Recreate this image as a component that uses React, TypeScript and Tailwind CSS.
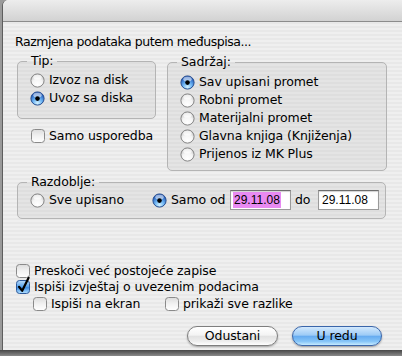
import React from 'react';

// Aqua-style radio button
const Radio: React.FC<{ on?: boolean }> = ({ on }) => (
  <svg width="15" height="15" viewBox="0 0 15 15" className="shrink-0">
    <defs>
      <radialGradient id="rOff" cx="50%" cy="80%" r="70%">
        <stop offset="0%" stopColor="#ffffff" />
        <stop offset="60%" stopColor="#f4f4f4" />
        <stop offset="100%" stopColor="#c9c9c9" />
      </radialGradient>
      <radialGradient id="rOn" cx="50%" cy="85%" r="75%">
        <stop offset="0%" stopColor="#d6f3ff" />
        <stop offset="45%" stopColor="#6fb6f4" />
        <stop offset="100%" stopColor="#1d56b8" />
      </radialGradient>
    </defs>
    <circle cx="7.5" cy="7.5" r="6.6" fill={on ? 'url(#rOn)' : 'url(#rOff)'} stroke={on ? '#2a4f8f' : '#858585'} strokeWidth="1" />
    <ellipse cx="7.5" cy="4.2" rx="4.2" ry="2.4" fill="#ffffff" opacity={on ? 0.55 : 0.7} />
    {on && <circle cx="7.5" cy="7.6" r="2.3" fill="#000" />}
  </svg>
);

// Aqua-style checkbox
const Check: React.FC<{ on?: boolean }> = ({ on }) => (
  <svg width="14" height="14" viewBox="0 0 14 14" className="shrink-0 overflow-visible">
    <defs>
      <linearGradient id="cOff" x1="0" y1="0" x2="0" y2="1">
        <stop offset="0%" stopColor="#dcdcdc" />
        <stop offset="50%" stopColor="#f2f2f2" />
        <stop offset="100%" stopColor="#ffffff" />
      </linearGradient>
      <linearGradient id="cOn" x1="0" y1="0" x2="0" y2="1">
        <stop offset="0%" stopColor="#b9dcfb" />
        <stop offset="45%" stopColor="#5da6ee" />
        <stop offset="55%" stopColor="#3d8de6" />
        <stop offset="100%" stopColor="#b6e4ff" />
      </linearGradient>
    </defs>
    <rect x="0.5" y="0.5" width="13" height="13" rx="3" fill={on ? 'url(#cOn)' : 'url(#cOff)'} stroke={on ? '#2e5a9c' : '#8a8a8a'} />
    {on && <path d="M3 6.8 L6.2 10.8 L12.6 -2.2" fill="none" stroke="#000" strokeWidth="2.2" strokeLinecap="round" strokeLinejoin="round" />}
  </svg>
);

const RadioRow: React.FC<{ on?: boolean; label: string; className?: string }> = ({ on, label, className = '' }) => (
  <div className={`flex items-center gap-[4px] h-[18px] ${className}`}>
    <Radio on={on} />
    <span className="whitespace-nowrap">{label}</span>
  </div>
);

const CheckRow: React.FC<{ on?: boolean; label: string; className?: string }> = ({ on, label, className = '' }) => (
  <div className={`flex items-center gap-[4px] ${className}`}>
    <Check on={on} />
    <span className="whitespace-nowrap">{label}</span>
  </div>
);

const Group: React.FC<{ label: string; className?: string; children: React.ReactNode }> = ({ label, className = '', children }) => (
  <fieldset className={`border border-[#b4b4b4] rounded-[5px] pl-[9px] bg-[rgba(0,0,0,0.045)] ${className}`}>
    <legend className="px-[4px] leading-[16px]">{label}</legend>
    {children}
  </fieldset>
);

const DateField: React.FC<{ value: string; selected?: boolean }> = ({ value, selected }) => (
  <div className="w-[61px] h-[20px] shrink-0 flex items-center pl-[2px] bg-white border border-[#9a9a9a] border-t-[#6e6e6e] shadow-[inset_0_1px_1px_rgba(0,0,0,0.18)] font-['Liberation_Sans',sans-serif] text-[12px] tracking-normal">
    {selected ? (
      <span className="h-[16px] leading-[16px] px-[1px] bg-[#e88af2]">{value}</span>
    ) : (
      <span className="pl-[1px]">{value}</span>
    )}
  </div>
);

export default function App() {
  return (
    <div className="w-[402px] h-[356px] flex flex-col bg-[#9a9a9a] overflow-hidden font-['DejaVu_Sans',sans-serif] text-[12.5px] tracking-[-0.1px] text-black">
      <div className="ml-[2px] h-[350px] shrink-0 flex flex-col border-l border-[#5e5e5e] rounded-tl-[6px] overflow-hidden bg-[repeating-linear-gradient(to_bottom,#efefef_0px,#efefef_2px,#e8e8e8_2px,#e8e8e8_4px)]">
        {/* title bar */}
        <div className="h-[22px] shrink-0 border-b border-[#8c8c8c] bg-[linear-gradient(to_bottom,#ededed,#d2d2d2)]" />

        <p className="pl-[12px] pt-[12px] leading-[16px] tracking-[-0.45px]">Razmjena podataka putem međuspisa...</p>

        <div className="flex items-start gap-[11px] pl-[14px] mt-[3px]">
          <div className="flex flex-col">
            <Group label="Tip:" className="w-[139px] pb-[11px]">
              <div className="ml-[3px] pt-[2px]">
                <RadioRow label="Izvoz na disk" />
                <RadioRow on label="Uvoz sa diska" />
              </div>
            </Group>
            <CheckRow label="Samo usporedba" className="mt-[8px] ml-[14px] h-[18px]" />
          </div>

          <Group label="Sadržaj:" className="w-[220px] mt-[1px] pb-[7px]">
            <div className="ml-[3px] pt-[3px]">
              <RadioRow on label="Sav upisani promet" />
              <RadioRow label="Robni promet" />
              <RadioRow label="Materijalni promet" />
              <RadioRow label="Glavna knjiga (Knjiženja)" />
              <RadioRow label="Prijenos iz MK Plus" />
            </div>
          </Group>
        </div>

        <div className="pl-[14px] mt-[3px]">
          <Group label="Razdoblje:" className="w-[369px] pb-[8px]">
            <div className="ml-[3px] flex items-center h-[20px]">
              <RadioRow label="Sve upisano" className="w-[122px]" />
              <RadioRow on label="Samo od" className="w-[78px]" />
              <DateField value="29.11.08" selected />
              <span className="w-[27px] pl-[4px]">do</span>
              <DateField value="29.11.08" />
            </div>
          </Group>
        </div>

        <CheckRow label="Preskoči već postojeće zapise" className="mt-[44px] pl-[13px] h-[16px]" />
        <CheckRow on label="Ispiši izvještaj o uvezenim podacima" className="pl-[13px] h-[16px]" />
        <div className="flex mt-[1px] pl-[30px] h-[16px]">
          <CheckRow label="Ispiši na ekran" className="w-[132px]" />
          <CheckRow label="prikaži sve razlike" />
        </div>

        <div className="flex justify-end gap-[14px] pr-[20px] mt-[14px]">
          <button className="w-[91px] h-[20px] rounded-full border border-[#7e7e7e] bg-[linear-gradient(to_bottom,#ffffff_0%,#f4f4f4_45%,#e2e2e2_52%,#eeeeee_80%,#ffffff_100%)] shadow-[0_1px_2px_rgba(0,0,0,0.3)] leading-[18px]">
            Odustani
          </button>
          <button className="w-[90px] h-[20px] rounded-full border border-[#3b66aa] bg-[linear-gradient(to_bottom,#d3e9fd_0%,#9dcbf6_45%,#67acf0_52%,#86c5f8_80%,#c6ebff_100%)] shadow-[0_1px_2px_rgba(0,0,0,0.35)] leading-[18px]">
            U redu
          </button>
        </div>
      </div>
      <div className="flex-1 bg-[linear-gradient(to_bottom,#474747,#8a8a8a)]" />
    </div>
  );
}
